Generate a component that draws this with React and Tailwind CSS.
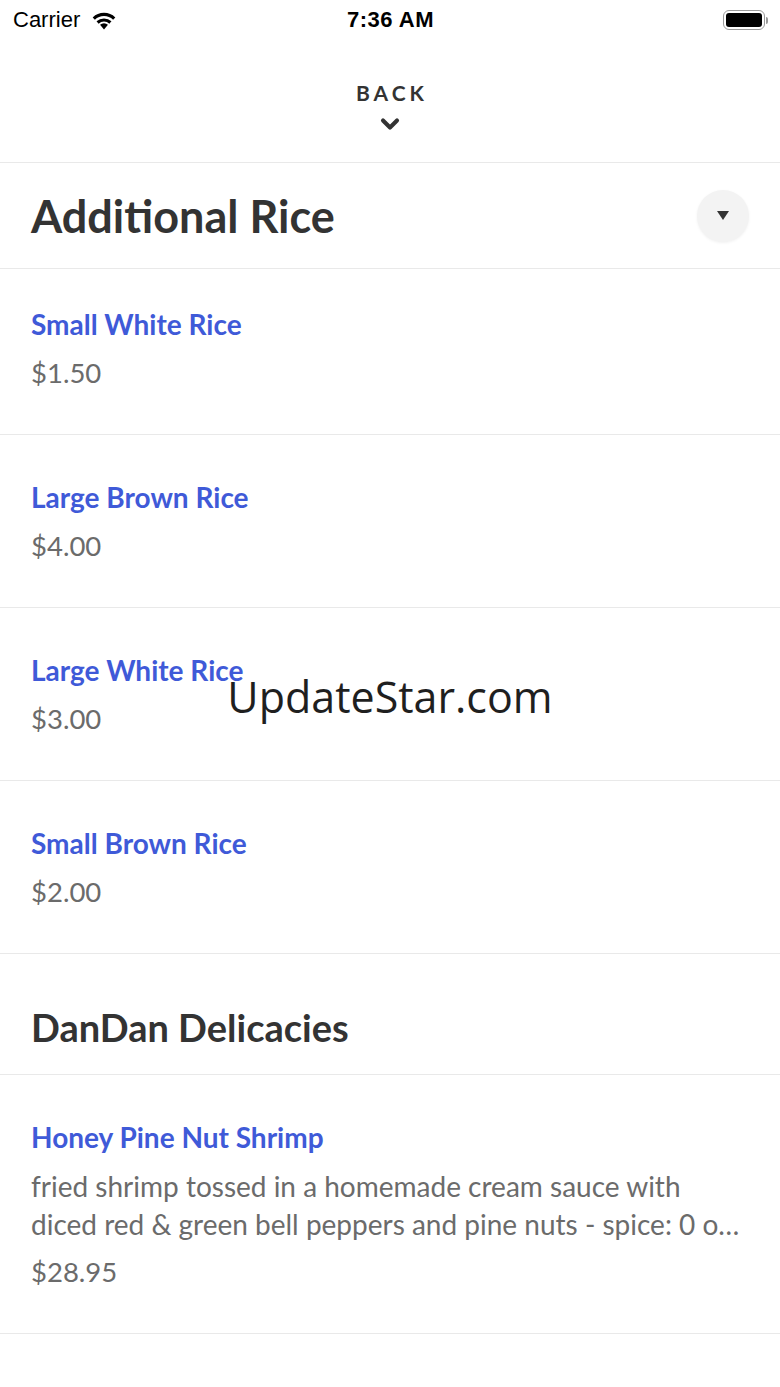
import { ChevronDown } from 'lucide-react';

const rice = [
    { name: 'Small White Rice', price: '$1.50' },
    { name: 'Large Brown Rice', price: '$4.00' },
    { name: 'Large White Rice', price: '$3.00' },
    { name: 'Small Brown Rice', price: '$2.00' },
];

function StatusBar() {
    return (
        <div className="h-[40px] flex items-center justify-between pl-[13px] pr-[12px] text-black" style={{ fontFamily: '"Liberation Sans", Arial, sans-serif' }}>
            <div className="flex items-center gap-[9px] w-[160px]">
                <span className="text-[22px] leading-none">Carrier</span>
                <svg width="30" height="21" viewBox="0 0 24 18" className="mt-[-1px]">
                    <path d="M12 17.5 L8.6 13.6 A5 5 0 0 1 15.4 13.6 Z" fill="#000" />
                    <path d="M5.6 10.6 A9.3 9.3 0 0 1 18.4 10.6 L16.6 12.6 A6.6 6.6 0 0 0 7.4 12.6 Z" fill="#000" />
                    <path d="M2.3 7.2 A14 14 0 0 1 21.7 7.2 L19.8 9.2 A11.3 11.3 0 0 0 4.2 9.2 Z" fill="#000" />
                </svg>
            </div>
            <span className="text-[22px] font-bold leading-none tracking-[0.5px]">7:36 AM</span>
            <div className="w-[160px] flex justify-end">
                <div className="flex items-center">
                    <div className="w-[42px] h-[20px] rounded-[6px] border-[1.5px] border-[#9a9a9a] p-[2px]">
                        <div className="w-full h-full rounded-[3px] bg-black" />
                    </div>
                    <div className="w-[2px] h-[7px] bg-[#9a9a9a] rounded-r-sm ml-[1px]" />
                </div>
            </div>
        </div>
    );
}

function Item({ name, price, desc, first }) {
    return (
        <div className={`pl-[31px] pr-[31px] border-b border-[#e9e9e9] ${first ? 'pt-[39px]' : 'pt-[46px]'} pb-[45px]`}>
            <div className="text-[28px] leading-[32px] font-bold text-[#3f5ad8]">{name}</div>
            {desc && (
                <div className="mt-[14px] text-[28px] leading-[38px] text-[#6b6b6b] line-clamp-2">{desc}</div>
            )}
            <div className={`${desc ? 'mt-[13px]' : 'mt-[17px]'} text-[27.5px] leading-[32px] text-[#6b6b6b]`}>{price}</div>
        </div>
    );
}

export default function App() {
    return (
        <div className="relative w-[780px] min-h-[1387px] bg-white" style={{ fontFamily: 'Lato, "Open Sans", sans-serif' }}>
            <StatusBar />

            <div className="h-[123px] border-b border-[#e9e9e9] flex flex-col items-center pt-[40px]">
                <span className="text-[21px] leading-[26px] font-bold tracking-[4px] text-[#333] pl-[4px]">BACK</span>
                <ChevronDown size={28} strokeWidth={3.5} className="text-[#333] mt-[4px]" />
            </div>

            <div className="h-[106px] border-b border-[#e9e9e9] flex items-center justify-between pl-[31px] pr-[31px]">
                <h1 className="text-[45px] font-bold text-[#333] leading-none mt-[2px]">Additional Rice</h1>
                <button className="w-[52px] h-[52px] rounded-full bg-[#f3f3f3] shadow-[0_1px_3px_rgba(0,0,0,0.06)] flex items-center justify-center">
                    <svg width="12" height="9" viewBox="0 0 12 9">
                        <path d="M0 0 H12 L6 9 Z" fill="#333" />
                    </svg>
                </button>
            </div>

            {rice.map((r, i) => (
                <Item key={r.name} name={r.name} price={r.price} first={i === 0} />
            ))}

            <div className="h-[121px] border-b border-[#e9e9e9] pl-[31px] pt-[50px]">
                <h2 className="text-[38px] font-bold text-[#333] leading-[46px]">DanDan Delicacies</h2>
            </div>

            <Item
                name="Honey Pine Nut Shrimp"
                desc="fried shrimp tossed in a homemade cream sauce with diced red & green bell peppers and pine nuts - spice: 0 out of 3"
                price="$28.95"
            />

            <div
                className="absolute left-0 right-0 top-[669px] text-center text-[43px] leading-[56px] text-[#1f1f1f] pointer-events-none"
                style={{ fontFamily: '"Open Sans", "Noto Sans", sans-serif' }}
            >
                UpdateStar.com
            </div>
        </div>
    );
}
